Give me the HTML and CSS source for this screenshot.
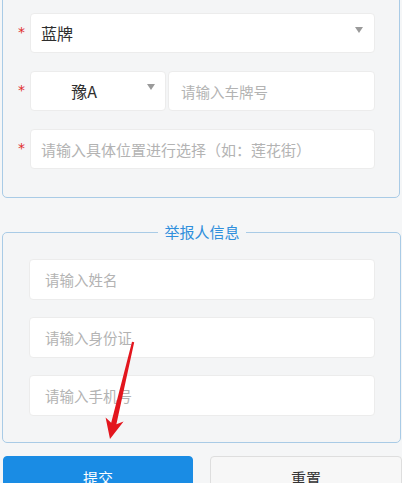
FILE: index.html
```html
<!DOCTYPE html>
<html lang="zh-CN">
<head>
<meta charset="utf-8">
<title>举报</title>
<link rel="stylesheet" href="styles.css">
</head>
<body>
<div class="page">
  <section class="panel panel-car">
    <div class="row">
      <span class="star">*</span>
      <div class="box select-full">
        <span class="value">蓝牌</span>
        <span class="caret"></span>
      </div>
    </div>
    <div class="row">
      <span class="star">*</span>
      <div class="plate">
        <div class="box select-prov">
          <span class="value">豫A</span>
          <span class="caret"></span>
        </div>
        <div class="box input-plate"><span class="ph">请输入车牌号</span></div>
      </div>
    </div>
    <div class="row">
      <span class="star">*</span>
      <div class="box input-addr"><span class="ph ph-addr">请输入具体位置进行选择（如：莲花街）</span></div>
    </div>
  </section>

  <fieldset class="panel panel-person">
    <legend class="legend">举报人信息</legend>
    <div class="box input-person"><span class="ph">请输入姓名</span></div>
    <div class="box input-person"><span class="ph">请输入身份证</span></div>
    <div class="box input-person"><span class="ph">请输入手机号</span></div>
  </fieldset>

  <div class="actions">
    <button class="btn btn-submit" type="button">提交</button>
    <button class="btn btn-reset" type="button">重置</button>
  </div>

  <svg class="arrow" width="402" height="483" viewBox="0 0 402 483">
    <polygon points="132,349.8 134.2,350.3 116.4,432.2 123.6,429.6 110,447 105.6,425.4 111.2,430.8" fill="#e3161e"/>
  </svg>
</div>
</body>
</html>
```

FILE: styles.css
```css
html, body {
  margin: 0;
  padding: 0;
}
body {
  background: #f5f6f7;
  font-family: "Noto Sans CJK SC", "Noto Sans", sans-serif;
  width: 402px;
  height: 483px;
  overflow: hidden;
}
.page {
  position: relative;
  width: 402px;
  height: 483px;
}
.panel {
  border: 1px solid #a9cbe6;
  border-radius: 5px;
  background: #f4f5f6;
  box-sizing: border-box;
}
.panel-car {
  margin: -8px 2px 0 2px;
  padding: 20px 0 28px 0;
  display: flex;
  flex-direction: column;
  gap: 18px;
}
.row {
  display: flex;
  align-items: center;
}
.star {
  width: 27px;
  padding-right: 5px;
  box-sizing: border-box;
  text-align: right;
  color: #e02a2a;
  font-size: 14px;
  line-height: 14px;
  height: 14px;
  margin-top: -2px;
  font-family: "DejaVu Sans", sans-serif;
}
.box {
  background: #ffffff;
  border: 1px solid #ececec;
  border-radius: 4px;
  box-sizing: border-box;
  height: 40px;
  display: flex;
  align-items: center;
  position: relative;
}
.select-full {
  width: 345px;
  padding-left: 10px;
}
.value {
  font-size: 16px;
  color: #2e2e2e;
}
.caret {
  position: absolute;
  width: 0;
  height: 0;
  border-left: 4.5px solid transparent;
  border-right: 4.5px solid transparent;
  border-top: 6px solid #9a9a9a;
}
.select-full .caret {
  right: 11px;
  top: 13px;
}
.plate {
  display: flex;
  gap: 2px;
  width: 345px;
}
.select-prov {
  width: 136px;
  justify-content: center;
  padding-right: 28px;
}
.select-prov .caret {
  right: 10px;
  top: 12px;
}
.input-plate {
  flex: 1;
  padding-left: 12px;
}
.ph {
  font-size: 14.5px;
  color: #b3b3b3;
}
.input-addr {
  width: 345px;
  padding-left: 10px;
}
.ph-addr {
  font-size: 15px;
}
.panel-person {
  margin: 23px 1px 0 2px;
  padding: 16px 25px 26px 26px;
  display: flex;
  flex-direction: column;
  gap: 17px;
  min-width: 0;
}
.legend {
  margin: 0 auto;
  padding: 0 6px;
  font-size: 15px;
  line-height: 22px;
  color: #2f8fdc;
}
.input-person {
  width: 346px;
  height: 41px;
  padding-left: 15px;
}
.actions {
  display: flex;
  gap: 17px;
  margin-top: 13px;
  padding: 0 0 0 3px;
}
.btn {
  height: 42px;
  border-radius: 4px;
  font-family: "Noto Sans CJK SC", sans-serif;
  font-size: 15px;
  padding: 0;
  box-sizing: border-box;
}
.btn-submit {
  width: 190px;
  background: #1a8ce4;
  border: 1px solid #1a8ce4;
  color: #ffffff;
}
.btn-reset {
  width: 192px;
  background: #f7f7f7;
  border: 1px solid #dedede;
  color: #333333;
}
.arrow {
  position: absolute;
  left: 0;
  top: 0;
  pointer-events: none;
}
```
